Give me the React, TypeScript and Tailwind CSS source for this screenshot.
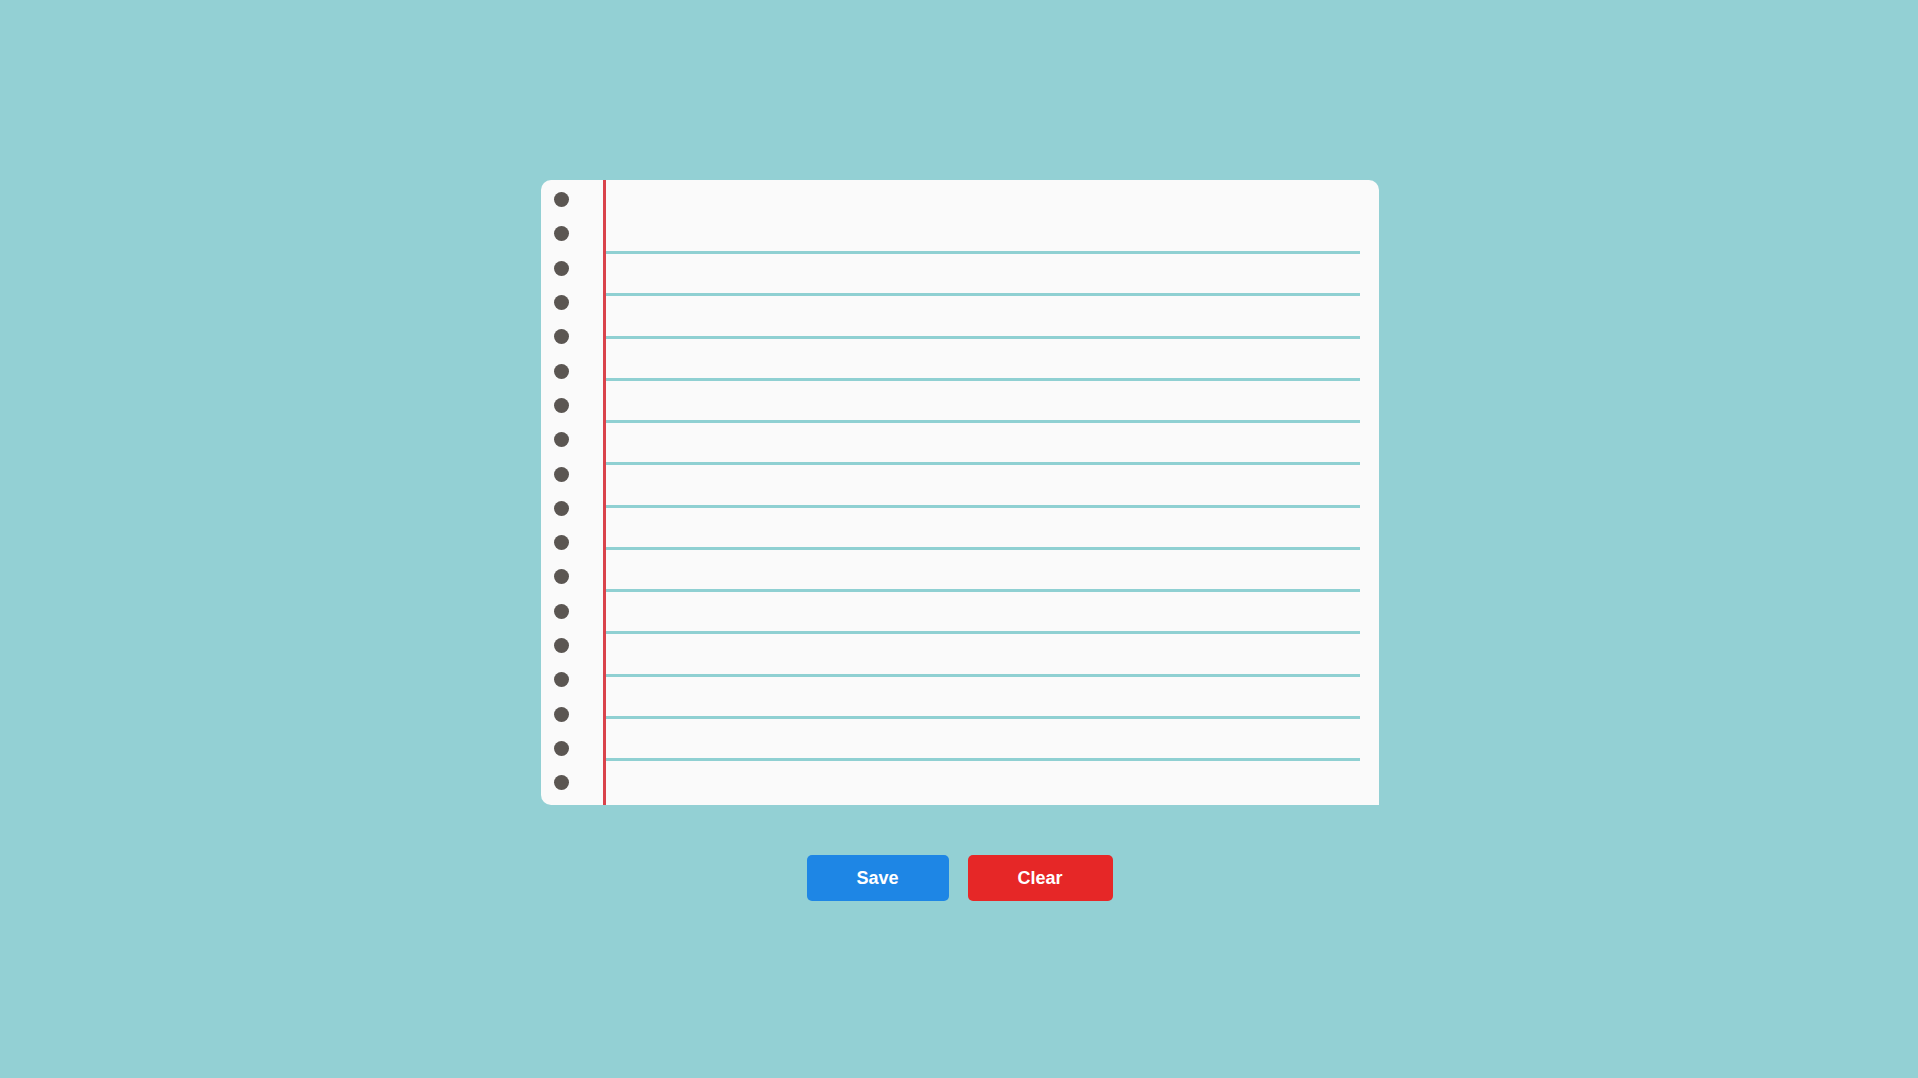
const holes = Array.from({ length: 18 }, (_, i) => i);
const rules = Array.from({ length: 13 }, (_, i) => i);

export default function App() {
  return (
    <div className="min-h-screen w-full bg-[#93d0d4] flex flex-col items-center justify-center pl-[2px] pt-[3px] font-['Liberation_Sans',Arial,sans-serif]">
      {/* notebook sheet */}
      <div className="w-[838px] h-[625px] bg-[#fafafa] rounded-tl-[10px] rounded-tr-[10px] rounded-bl-[10px] flex overflow-hidden">
        <div className="w-[62px] shrink-0 flex flex-col items-start pl-[13px] pt-[12px] gap-[19.32px]">
          {holes.map((i) => (
            <span key={i} className="block w-[15px] h-[15px] rounded-full bg-[#5b5652]" />
          ))}
        </div>
        <div className="w-[3px] shrink-0 bg-[#d9434b]" />
        <div className="flex-1 pr-[19px] pt-[71px]">
          {rules.map((i) => (
            <div key={i} className="h-[42.25px]">
              <div className="h-[3px] bg-[#8fd0d2]" />
            </div>
          ))}
        </div>
      </div>

      <div className="mt-[50px] flex gap-[19px] pr-[1px]">
        <button className="w-[142px] h-[46px] rounded-[5px] bg-[#1e86e5] text-white font-bold text-[18px]">
          Save
        </button>
        <button className="w-[145px] h-[46px] rounded-[5px] bg-[#e62727] text-white font-bold text-[18px]">
          Clear
        </button>
      </div>
    </div>
  );
}
